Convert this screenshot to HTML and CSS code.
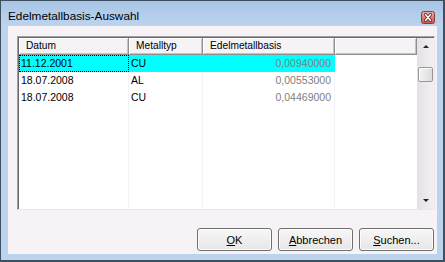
FILE: index.html
```html
<!DOCTYPE html>
<html lang="de">

<head>
  <meta charset="UTF-8" />
  <title>Edelmetallbasis-Auswahl</title>
  <link rel="stylesheet" href="styles.css">
</head>

<body>
  <div class="window">
    <div class="titlebar">
      <span class="title">Edelmetallbasis-Auswahl</span>
      <span class="close">
        <svg width="14" height="13" viewBox="0 0 14 13">
          <defs>
            <linearGradient id="cg" x1="0" y1="0" x2="0" y2="1">
              <stop offset="0" stop-color="#eab0aa" />
              <stop offset="0.5" stop-color="#d9827a" />
              <stop offset="1" stop-color="#c8554b" />
            </linearGradient>
          </defs>
          <rect x="0.5" y="0.5" width="13" height="12" rx="2" fill="url(#cg)" stroke="#8c3c36" />
          <path d="M4.5 3.5 L9.5 9.5 M9.5 3.5 L4.5 9.5" stroke="#5a1d19" stroke-width="3" stroke-linecap="round" />
          <path d="M4.5 3.5 L9.5 9.5 M9.5 3.5 L4.5 9.5" stroke="#fff" stroke-width="1.6" stroke-linecap="round" />
        </svg>
      </span>
    </div>

    <div class="client">
      <div class="list">
        <div class="list-body">
          <div class="row head">
            <div class="hcell">Datum</div>
            <div class="hcell">Metalltyp</div>
            <div class="hcell">Edelmetallbasis</div>
            <div class="hcell"></div>
          </div>
          <div class="row selected">
            <div class="cell focus">11.12.2001</div>
            <div class="cell">CU</div>
            <div class="cell num">0,00940000</div>
            <div class="cell filler"></div>
          </div>
          <div class="row">
            <div class="cell">18.07.2008</div>
            <div class="cell">AL</div>
            <div class="cell num">0,00553000</div>
            <div class="cell filler"></div>
          </div>
          <div class="row">
            <div class="cell">18.07.2008</div>
            <div class="cell">CU</div>
            <div class="cell num">0,04469000</div>
            <div class="cell filler"></div>
          </div>
          <div class="row rest">
            <div class="cell"></div>
            <div class="cell"></div>
            <div class="cell"></div>
            <div class="cell filler"></div>
          </div>
        </div>
        <div class="vscroll">
          <div class="sbtn"><span class="arrow-up"></span></div>
          <div class="thumb"></div>
          <div class="track"></div>
          <div class="sbtn"><span class="arrow-down"></span></div>
        </div>
      </div>

      <div class="actions">
        <button type="button"><u>O</u>K</button>
        <button type="button"><u>A</u>bbrechen</button>
        <button type="button"><u>S</u>uchen...</button>
      </div>
    </div>
  </div>
</body>

</html>
```

FILE: styles.css
```css
body {
  margin: 0;
  font-family: 'Liberation Sans', Arial, sans-serif;
}

.window {
  width: 445px;
  height: 262px;
  box-sizing: border-box;
  border: 1px solid #3e4f60;
  border-right-width: 2px;
  border-bottom-width: 2px;
  background: #bcd3ed;
  display: flex;
  flex-direction: column;
}

.titlebar {
  height: 25px;
  box-sizing: border-box;
  display: flex;
  justify-content: space-between;
  align-items: flex-start;
  padding: 9px 8px 0 7px;
  background: linear-gradient(to bottom, #a8c5e6, #bdd4ee);
}

.title {
  font-size: 11.8px;
  line-height: 13px;
  color: #000;
}

.close {
  display: block;
  width: 14px;
  height: 13px;
  margin-top: 1px;
}

.close svg {
  display: block;
}

.client {
  flex: 1;
  margin: 0 6px 6px 7px;
  background: #f6f2f6;
  padding: 10px 2px 3px 9px;
  display: flex;
  flex-direction: column;
}

/* list view */

.list {
  height: 174px;
  box-sizing: border-box;
  display: flex;
  background: #fff;
  border: 1px solid;
  border-color: #a0a0a0 #e8e8e8 #e8e8e8 #a0a0a0;
  box-shadow: inset 1px 1px #696969;
  padding: 1px 0 0 1px;
}

.list-body {
  flex: 1;
  display: flex;
  flex-direction: column;
}

.row {
  display: grid;
  grid-template-columns: 110px 74px 132px 1fr;
  height: 17px;
  font-size: 10.5px;
  line-height: 17px;
}

.row.rest {
  flex: 1;
}

.head {
  font-size: 10.2px;
}

.hcell {
  box-sizing: border-box;
  background: #f5f3f5;
  padding-left: 7px;
  border-right: 1px solid #8f8f8f;
  border-bottom: 1px solid #8f8f8f;
  box-shadow: inset 1px 1px #fff, inset -1px -1px #c4c4c4;
  line-height: 16px;
  color: #000;
  white-space: nowrap;
}

.cell {
  box-sizing: border-box;
  padding-left: 2px;
  border-right: 1px solid #f2f2f2;
  color: #000;
  white-space: nowrap;
}

.cell.filler {
  border-right: none;
}

.cell.num {
  text-align: right;
  padding-right: 3px;
  color: #808080;
}

.selected .cell {
  background: #00ffff;
  border-right-color: #00ffff;
}

.selected .cell.filler {
  background: #fff;
}

.cell.focus {
  outline: 1px dotted #000;
  outline-offset: -1px;
}

/* scrollbar */

.vscroll {
  width: 17px;
  display: flex;
  flex-direction: column;
  background: linear-gradient(to right, #e4e2e5, #f2f0f3);
}

.sbtn {
  height: 17px;
  display: flex;
  align-items: center;
  justify-content: center;
}

.arrow-up {
  width: 0;
  height: 0;
  border-left: 3px solid transparent;
  border-right: 3px solid transparent;
  border-bottom: 3px solid #222;
}

.arrow-down {
  width: 0;
  height: 0;
  border-left: 3px solid transparent;
  border-right: 3px solid transparent;
  border-top: 3px solid #222;
}

.thumb {
  margin: 12px 1px 0 1px;
  height: 15px;
  box-sizing: border-box;
  border: 1px solid #979797;
  border-radius: 2px;
  background: linear-gradient(to right, #f4f4f4, #dcdcdc);
  box-shadow: inset 1px 1px #fff;
}

.track {
  flex: 1;
}

/* buttons */

.actions {
  margin-top: 18px;
  display: flex;
  justify-content: flex-end;
  gap: 6px;
  padding-right: 1px;
}

button {
  width: 75px;
  height: 23px;
  padding: 0;
  border: 1px solid #707070;
  border-radius: 3px;
  background: linear-gradient(to bottom, #f7f7f7, #e6e6e6);
  box-shadow: inset 0 0 0 1px #fcfcfc;
  font-family: 'Liberation Sans', Arial, sans-serif;
  font-size: 11px;
  color: #000;
}
```
